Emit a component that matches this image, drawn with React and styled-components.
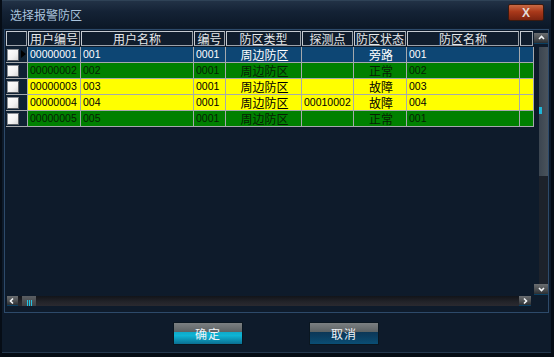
import React from "react"
import styled, { createGlobalStyle } from 'styled-components'

const GlobalStyle = createGlobalStyle`
  html, body { margin: 0; padding: 0; background: #0d1a29; }
  body { font-family: "Noto Sans CJK SC", "Liberation Sans", sans-serif; }
`

const cols = '22px 53px 113px 32px 76px 52px 53px 113px 14px'

const Window = styled.div`
  width: 554px;
  height: 357px;
  box-sizing: border-box;
  background: #0e1b2b;
  border-left: 2px solid #060d16;
  border-right: 3px solid #060d16;
  display: flex;
  flex-direction: column;
`

const TitleBar = styled.div`
  height: 27px;
  display: flex;
  align-items: center;
  justify-content: space-between;
  padding: 0 7px 0 8px;
  background: linear-gradient(#223246 0%, #142235 40%, #0c1827 100%);
  border-top: 1px solid #2f4256;
`

const Title = styled.span`
  color: #aac3dc;
  font-size: 12px;
  margin-top: -1px;
`

const CloseButton = styled.div`
  width: 36px;
  height: 17px;
  margin-top: -4px;
  box-sizing: border-box;
  border: 1px solid #3a1a10;
  border-radius: 2px;
  background: linear-gradient(#c86a44 0%, #a9381a 45%, #7c2410 100%);
  display: flex;
  align-items: center;
  justify-content: center;
  color: #e2dcd8;
  font: bold 12px "Liberation Sans", sans-serif;
`

const Frame = styled.div`
  margin: 1px 2px 0 2px;
  height: 284px;
  box-sizing: border-box;
  border: 1px solid #2d4a6a;
  padding: 1px 0 0 1px;
  display: grid;
  grid-template-columns: 528px 14px;
  column-gap: 0;
  grid-template-rows: 264px 11px;
`

const Table = styled.div`
  display: flex;
  flex-direction: column;
  overflow: hidden;
`

const HeaderRow = styled.div`
  display: grid;
  grid-template-columns: ${cols};
  height: 15px;
  margin-bottom: 1px;
`

const HeadCell = styled.div`
  box-sizing: border-box;
  border: 1px solid #9da3aa;
  border-left-color: #c7ccd2;
  border-top-color: #c7ccd2;
  margin-right: 1px;
  background: #101d2d;
  color: #e6e8ea;
  font-size: 12px;
  line-height: 13px;
  text-align: center;
  white-space: nowrap;
  overflow: hidden;
`

const rowColors = {
  selected: { bg: '#0d4674', fg: '#ffffff' },
  green: { bg: '#008000', fg: '#072005' },
  yellow: { bg: '#ffff00', fg: '#000000' },
}

const Row = styled.div`
  display: grid;
  grid-template-columns: ${cols};
  height: 16px;
  box-sizing: border-box;
  border-bottom: 1px solid #a5a9ad;
  background: ${({ $tone }) => rowColors[$tone].bg};
  color: ${({ $tone }) => rowColors[$tone].fg};
`

const Cell = styled.div`
  box-sizing: border-box;
  border-right: 1px solid #a5a9ad;
  padding-left: 2px;
  font-family: ${({ $cjk }) => ($cjk ? '"Noto Sans CJK SC", sans-serif' : '"Liberation Sans", sans-serif')};
  font-size: ${({ $cjk }) => ($cjk ? '12px' : '10.5px')};
  line-height: 15px;
  text-align: ${({ $center }) => ($center ? 'center' : 'left')};
  white-space: nowrap;
  overflow: hidden;
`

const CheckCell = styled.div`
  box-sizing: border-box;
  background: #0f2133;
  border-right: 1px solid #a5a9ad;
  display: flex;
  align-items: center;
  padding-left: 1px;
  position: relative;
`

const CheckBox = styled.div`
  width: 12px;
  height: 12px;
  box-sizing: border-box;
  border: 1px solid #8c9096;
  border-right-color: #5c6066;
  border-bottom-color: #5c6066;
  background: linear-gradient(135deg, #ffffff 0%, #f2f2f2 60%, #d8d8d8 100%);
`

const Pointer = styled.div`
  position: absolute;
  right: 1px;
  top: 3px;
  width: 0;
  height: 0;
  border-top: 4px solid transparent;
  border-bottom: 4px solid transparent;
  border-left: 5px solid #000000;
`

const VScroll = styled.div`
  display: flex;
  flex-direction: column;
  align-items: flex-end;
  padding-top: 2px;
  box-sizing: border-box;
  height: 264px;
`

const ArrowButton = styled.div`
  box-sizing: border-box;
  flex: none;
  width: ${({ $w }) => $w}px;
  height: ${({ $h }) => $h}px;
  background: linear-gradient(#6a6d70 0%, #4c4f52 55%, #2a2e32 100%);
  border-bottom: 1px solid #0b4062;
  display: flex;
  align-items: center;
  justify-content: center;
`

const VThumb = styled.div`
  width: 9px;
  height: 129px;
  margin-top: 3px;
  background: linear-gradient(90deg, #3b4550, #4a535c);
  position: relative;
`

const VGrip = styled.div`
  position: absolute;
  left: 0;
  top: 60px;
  width: 3px;
  height: 7px;
  background: #1fb6d8;
`

const VTrack = styled.div`
  width: 9px;
  flex: 1;
  background: #1d222b;
`

const HScroll = styled.div`
  display: flex;
  align-items: flex-start;
  height: 11px;
  padding: 1px 3px 0 1px;
  box-sizing: border-box;
`

const HTrack = styled.div`
  flex: 1;
  height: 10px;
  background: linear-gradient(#121419, #23242a 60%, #2a2a30);
  display: flex;
  align-items: center;
  padding-left: 4px;
`

const HThumb = styled.div`
  width: 14px;
  height: 10px;
  background: linear-gradient(#5a5e62, #3e4246);
  display: flex;
  align-items: flex-end;
  justify-content: center;
  gap: 1px;
`

const GripBar = styled.div`
  width: 1px;
  height: 6px;
  background: #22c0e0;
`

const Footer = styled.div`
  flex: 1;
  display: flex;
  align-items: flex-start;
  padding: 9px 0 0 171px;
  gap: 66px;
  border-bottom: 4px solid #050c14;
  box-shadow: inset 0 -1px 0 #24384e;
`

const buttonBottoms = {
  primary: 'linear-gradient(#0e8fb0, #0fb4d4 60%, #0b6f92)',
  plain: 'linear-gradient(#0a2a44, #0c3c5e 60%, #0a4e74)',
}

const DialogButton = styled.div`
  width: 70px;
  height: 23px;
  box-sizing: border-box;
  border: 1px solid #0a1620;
  background:
    linear-gradient(#7c8082 0%, #5a6062 45%, transparent 45%),
    ${({ $kind }) => buttonBottoms[$kind]};
  color: #f0f4f8;
  font-size: 12px;
  line-height: 21px;
  text-align: center;
  letter-spacing: 1px;
`

const Chevron = ({ dir }) => {
  const pts = {
    up: '2,5 4.5,2.5 7,5',
    down: '2,3 4.5,5.5 7,3',
    left: '5,1.5 2.5,4 5,6.5',
    right: '3,1.5 5.5,4 3,6.5',
  }[dir]
  return (
    <svg width="9" height="8" viewBox="0 0 9 8">
      <polyline points={pts} fill="none" stroke="#f4f6f8" strokeWidth="1.6" />
    </svg>
  )
}

const headers = ['', '用户编号', '用户名称', '编号', '防区类型', '探测点', '防区状态', '防区名称', '']

const rows = [
  { code: '00000001', name: '001', num: '0001', type: '周边防区', point: '', state: '旁路', zone: '001', tone: 'selected' },
  { code: '00000002', name: '002', num: '0001', type: '周边防区', point: '', state: '正常', zone: '002', tone: 'green' },
  { code: '00000003', name: '003', num: '0001', type: '周边防区', point: '', state: '故障', zone: '003', tone: 'yellow' },
  { code: '00000004', name: '004', num: '0001', type: '周边防区', point: '00010002', state: '故障', zone: '004', tone: 'yellow' },
  { code: '00000005', name: '005', num: '0001', type: '周边防区', point: '', state: '正常', zone: '001', tone: 'green' },
]

export default function App() {
  return (
    <>
      <GlobalStyle />
      <Window>
        <TitleBar>
          <Title>选择报警防区</Title>
          <CloseButton>X</CloseButton>
        </TitleBar>
        <Frame>
          <Table>
            <HeaderRow>
              {headers.map((h, i) => (
                <HeadCell key={i}>{h}</HeadCell>
              ))}
            </HeaderRow>
            {rows.map((r, i) => (
              <Row key={r.code} $tone={r.tone}>
                <CheckCell>
                  <CheckBox />
                  {i === 0 && <Pointer />}
                </CheckCell>
                <Cell>{r.code}</Cell>
                <Cell>{r.name}</Cell>
                <Cell>{r.num}</Cell>
                <Cell $cjk $center>{r.type}</Cell>
                <Cell>{r.point}</Cell>
                <Cell $cjk $center>{r.state}</Cell>
                <Cell>{r.zone}</Cell>
                <Cell />
              </Row>
            ))}
          </Table>
          <VScroll>
            <ArrowButton $w={14} $h={11}><Chevron dir="up" /></ArrowButton>
            <VThumb><VGrip /></VThumb>
            <VTrack />
            <ArrowButton $w={14} $h={11}><Chevron dir="down" /></ArrowButton>
          </VScroll>
          <HScroll>
            <ArrowButton $w={11} $h={10}><Chevron dir="left" /></ArrowButton>
            <HTrack>
              <HThumb>
                <GripBar /><GripBar /><GripBar />
              </HThumb>
            </HTrack>
            <ArrowButton $w={12} $h={10}><Chevron dir="right" /></ArrowButton>
          </HScroll>
          <span />
        </Frame>
        <Footer>
          <DialogButton $kind="primary">确定</DialogButton>
          <DialogButton $kind="plain">取消</DialogButton>
        </Footer>
      </Window>
    </>
  )
}
